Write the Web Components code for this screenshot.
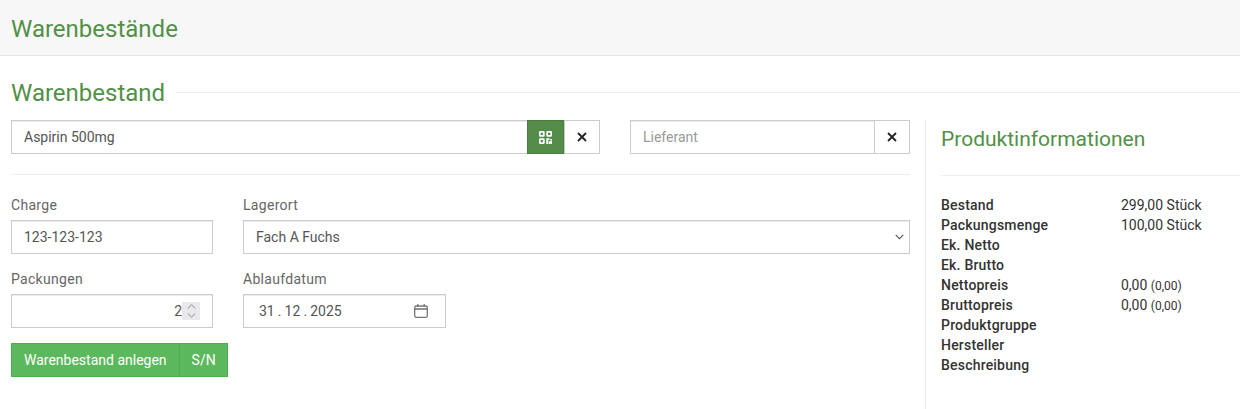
<!DOCTYPE html>
<html lang="de">
<head>
<meta charset="utf-8">
<title>Warenbestände</title>
<style>
  html, body { margin: 0; background: #fff; }
  body { font-family: Roboto, sans-serif; font-size: 14px; color: #333; overflow: hidden; }
</style>
</head>
<body>
<stock-page>
  <page-header slot="header">Warenbestände</page-header>
  <section-title slot="title">Warenbestand</section-title>

  <input-group slot="search" style="width:589px">
    <span>Aspirin 500mg</span>
    <icon-button slot="buttons" kind="qr"></icon-button>
    <icon-button slot="buttons" kind="clear"></icon-button>
  </input-group>
  <input-group slot="search" style="width:280px" placeholder>
    <span>Lieferant</span>
    <icon-button slot="buttons" kind="clear"></icon-button>
  </input-group>

  <form-field slot="row1" label="Charge" style="width:202px"><text-box>123-123-123</text-box></form-field>
  <form-field slot="row1" label="Lagerort" style="flex:1"><text-box trailing="chevron">Fach A Fuchs</text-box></form-field>
  <form-field slot="row2" label="Packungen" style="width:202px"><text-box trailing="spin" align="end">2</text-box></form-field>
  <form-field slot="row2" label="Ablaufdatum" style="width:203px"><text-box trailing="calendar">31 . 12 . 2025</text-box></form-field>

  <split-button slot="actions"><span>Warenbestand anlegen</span><span>S/N</span></split-button>

  <product-info slot="info">
    <info-row label="Bestand">299,00 Stück</info-row>
    <info-row label="Packungsmenge">100,00 Stück</info-row>
    <info-row label="Ek. Netto"></info-row>
    <info-row label="Ek. Brutto"></info-row>
    <info-row label="Nettopreis">0,00 <small style="font-size:12px">(0,00)</small></info-row>
    <info-row label="Bruttopreis">0,00 <small style="font-size:12px">(0,00)</small></info-row>
    <info-row label="Produktgruppe"></info-row>
    <info-row label="Hersteller"></info-row>
    <info-row label="Beschreibung"></info-row>
  </product-info>
</stock-page>

<script>
const ICONS = {
  qr: `<svg width="13" height="13" viewBox="0 0 13 13" fill="none" stroke="#fff" stroke-width="1.7">
    <rect x=".85" y=".85" width="4" height="4" rx=".4"/><rect x="8.15" y=".85" width="4" height="4" rx=".4"/>
    <rect x=".85" y="8.15" width="4" height="4" rx=".4"/><path d="M8.15 13V8.15h2.4M12.2 8v1.8M10.4 11.2H13V13h-2.6z"/></svg>`,
  clear: `<svg width="10" height="10" viewBox="0 0 10 10" fill="none" stroke="#222" stroke-width="1.8"><path d="M1 1l8 8M9 1L1 9"/></svg>`,
  chevron: `<svg width="9" height="6" viewBox="0 0 9 6" fill="none" stroke="#555" stroke-width="1.1"><path d="M.7.9l3.8 3.8L8.3.9"/></svg>`,
  calendar: `<svg width="14" height="14" viewBox="0 0 14 14" fill="none" stroke="#777" stroke-width="1.3"><rect x=".7" y="2" width="12.6" height="11.3" rx="1.6"/><path d="M.7 5h12.6" stroke-width="1.6"/><path d="M3.8 0v3M10.2 0v3"/></svg>`,
  spin: `<svg width="9" height="16" viewBox="0 0 9 16" fill="none" stroke="#888" stroke-width="1"><path d="M.9 5.4l3.6-3.6 3.6 3.6M.9 10.6l3.6 3.6 3.6-3.6"/></svg>`
};

class StockPage extends HTMLElement {
  constructor() {
    super();
    this.attachShadow({ mode: "open" }).innerHTML = `
      <style>
        :host { display: block; height: 409px; }
        .title { display: block; padding: 24px 0 0 11px; }
        .body { display: flex; height: 289px; margin-top: 14px; }
        .left { width: 899px; margin-left: 11px; flex: none; }
        .search { display: flex; justify-content: space-between; padding-bottom: 20px; border-bottom: 1px solid #eee; }
        .row { display: flex; gap: 30px; }
        .row.first { margin-top: 20px; }
        .row.second { margin-top: 15px; }
        .actions { margin-top: 15px; }
        .right { margin-left: 15px; flex: 1; border-left: 1px solid #eee; padding-left: 15px; }
      </style>
      <slot name="header"></slot>
      <div class="title"><slot name="title"></slot></div>
      <div class="body">
        <div class="left">
          <div class="search"><slot name="search"></slot></div>
          <div class="row first"><slot name="row1"></slot></div>
          <div class="row second"><slot name="row2"></slot></div>
          <div class="actions"><slot name="actions"></slot></div>
        </div>
        <div class="right"><slot name="info"></slot></div>
      </div>`;
  }
}

class PageHeader extends HTMLElement {
  constructor() {
    super();
    this.attachShadow({ mode: "open" }).innerHTML = `
      <style>
        :host { display: block; height: 55px; box-sizing: content-box; background: #f7f7f7;
                border-bottom: 1px solid #e5e5e5; color: #529048; font-size: 24px; line-height: 59px; padding-left: 11px; }
      </style><slot></slot>`;
  }
}

class SectionTitle extends HTMLElement {
  constructor() {
    super();
    this.attachShadow({ mode: "open" }).innerHTML = `
      <style>
        :host { display: flex; align-items: center; gap: 10px; color: #529048; font-size: 24px; line-height: 26px; }
        i { flex: 1; height: 1px; background: #eee; margin-top: -1px; }
      </style><span><slot></slot></span><i></i>`;
  }
}

class InputGroup extends HTMLElement {
  constructor() {
    super();
    this.attachShadow({ mode: "open" }).innerHTML = `
      <style>
        :host { display: flex; height: 34px; box-sizing: border-box; background: #fff;
                border: 1px solid #ccc; box-shadow: inset 0 1px 1px rgba(0,0,0,.075); }
        .text { flex: 1; padding-left: 12px; line-height: 32px; color: #555; }
        :host([placeholder]) .text { color: #999; }
        .buttons { display: flex; margin: -1px -1px -1px 0; }
      </style>
      <div class="text"><slot></slot></div>
      <div class="buttons"><slot name="buttons"></slot></div>`;
  }
}

class IconButton extends HTMLElement {
  constructor() {
    super();
    const qr = this.getAttribute("kind") === "qr";
    this.attachShadow({ mode: "open" }).innerHTML = `
      <style>
        :host { display: flex; align-items: center; justify-content: center; box-sizing: border-box;
                width: ${qr ? 37 : 36}px; height: 34px;
                border: 1px solid ${qr ? "#4a7d42" : "#ccc"}; background: ${qr ? "#548c49" : "#fff"}; }
        svg { display: block; }
      </style>${ICONS[this.getAttribute("kind")]}`;
  }
}

class FormField extends HTMLElement {
  constructor() {
    super();
    this.attachShadow({ mode: "open" }).innerHTML = `
      <style>
        :host { display: block; }
        label { display: block; height: 20px; line-height: 20px; margin-bottom: 5px; color: #666;
                font-size: 14px; letter-spacing: .3px; }
      </style>
      <label>${this.getAttribute("label")}</label><slot></slot>`;
  }
}

class TextBox extends HTMLElement {
  constructor() {
    super();
    const trailing = this.getAttribute("trailing");
    const end = this.getAttribute("align") === "end";
    let extra = "";
    if (trailing === "spin") extra = `<span class="spin">${ICONS.spin}</span>`;
    else if (trailing) extra = `<span class="icon ${trailing}">${ICONS[trailing]}</span>`;
    this.attachShadow({ mode: "open" }).innerHTML = `
      <style>
        :host { display: flex; align-items: center; height: 34px; box-sizing: border-box; background: #fff;
                border: 1px solid #ccc; box-shadow: inset 0 1px 1px rgba(0,0,0,.075);
                padding: 0 12px; color: #555; line-height: 32px; }
        .text { flex: 1; ${end ? "text-align: right;" : ""} }
        .icon { display: flex; }
        .chevron { margin-right: -7px; }
        .calendar { margin-right: 5px; margin-top: -1px; }
        .text.date { padding-left: 3px; word-spacing: -.4px; }
        .spin { display: flex; align-items: center; justify-content: center; width: 18px; height: 18px; background: #e9e9ed; }
      </style>
      <div class="text ${trailing === "calendar" ? "date" : ""}"><slot></slot></div>${extra}`;
  }
}

class SplitButton extends HTMLElement {
  constructor() {
    super();
    this.attachShadow({ mode: "open" }).innerHTML = `
      <style>
        :host { display: inline-flex; height: 34px; box-sizing: border-box; background: #5cb85c; border: 1px solid #4cae4c;
                color: #fff; line-height: 32px; }
        ::slotted(span) { padding: 0 12px; }
        ::slotted(span:last-child) { border-left: 1px solid #4cae4c; padding-right: 11px; }
      </style><slot></slot>`;
  }
}

class ProductInfo extends HTMLElement {
  constructor() {
    super();
    this.attachShadow({ mode: "open" }).innerHTML = `
      <style>
        :host { display: block; }
        h2 { margin: 0; height: 56px; box-sizing: border-box; padding-top: 5px; border-bottom: 1px solid #eee;
             font-weight: 400; font-size: 21px; line-height: 28px; color: #529048; }
        .rows { margin-top: 19px; }
      </style>
      <h2>Produktinformationen</h2>
      <div class="rows"><slot></slot></div>`;
  }
}

class InfoRow extends HTMLElement {
  constructor() {
    super();
    this.attachShadow({ mode: "open" }).innerHTML = `
      <style>
        :host { display: flex; height: 20px; line-height: 20px; color: #333; }
        b { width: 180px; flex: none; font-weight: 500; letter-spacing: .2px; }
      </style>
      <b>${this.getAttribute("label")}</b><span><slot></slot></span>`;
  }
}

customElements.define("stock-page", StockPage);
customElements.define("page-header", PageHeader);
customElements.define("section-title", SectionTitle);
customElements.define("input-group", InputGroup);
customElements.define("icon-button", IconButton);
customElements.define("form-field", FormField);
customElements.define("text-box", TextBox);
customElements.define("split-button", SplitButton);
customElements.define("product-info", ProductInfo);
customElements.define("info-row", InfoRow);
</script>
</body>
</html>
